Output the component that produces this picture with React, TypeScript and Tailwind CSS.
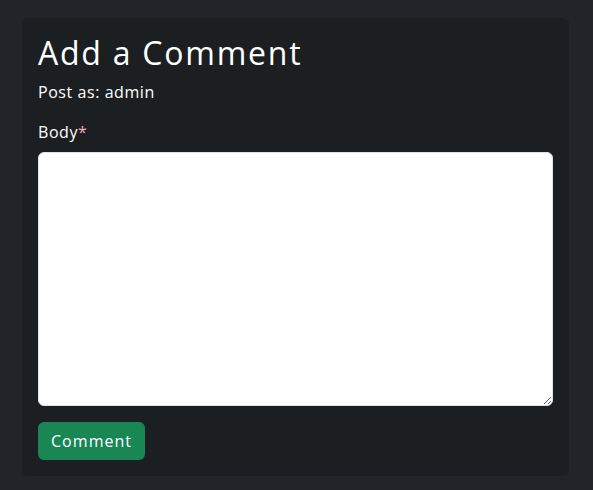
export default function App() {
  return (
    <div className="min-h-screen w-full bg-[#212529] px-[22px] pt-[18px] pb-4 font-['Open_Sans',sans-serif] text-white">
      <div className="w-[547px] rounded-md bg-[#1c1f22] px-4 pt-4 pb-4">
        <h2 className="mb-2 text-[32px] leading-[1.2] font-normal tracking-[0.055em]">Add a Comment</h2>
        <p className="mb-4 text-base leading-6 tracking-[0.035em]">Post as: admin</p>
        <form>
          <label className="mb-2 block text-base leading-6 tracking-[0.035em]">
            Body<span className="text-[#f1aeb5]">*</span>
          </label>
          <textarea className="block h-[254px] w-full rounded-md border border-[#dee2e6] bg-white px-3 py-1.5 text-black" />
          <button
            type="button"
            className="mt-4 h-[38px] rounded-md bg-[#198754] px-[13px] text-base tracking-[0.065em] text-white"
          >
            Comment
          </button>
        </form>
      </div>
    </div>
  );
}
